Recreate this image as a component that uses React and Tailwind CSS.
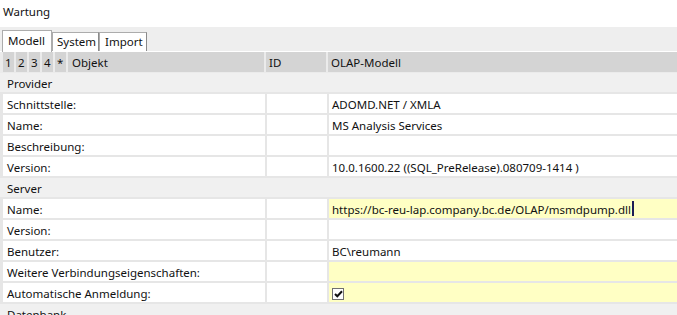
import { useState } from "react";

const rows = [
  { group: "Provider" },
  { label: "Schnittstelle:", value: "ADOMD.NET / XMLA" },
  { label: "Name:", value: "MS Analysis Services" },
  { label: "Beschreibung:", value: "" },
  { label: "Version:", value: "10.0.1600.22 ((SQL_PreRelease).080709-1414 )" },
  { group: "Server" },
  { label: "Name:", value: "https://bc-reu-lap.company.bc.de/OLAP/msmdpump.dll", editable: true, cursor: true },
  { label: "Version:", value: "" },
  { label: "Benutzer:", value: "BC\\reumann" },
  { label: "Weitere Verbindungseigenschaften:", value: "", editable: true },
  { label: "Automatische Anmeldung:", checkbox: true, editable: true },
  { group: "Datenbank" },
];

const tabs = [
  { label: "Modell", w: "w-[50px] pl-[5px]" },
  { label: "System", w: "w-[47px] pl-[4px]" },
  { label: "Import", w: "w-[48px] pl-[5px]" },
];

function CheckBox({ checked }) {
  return (
    <span className="inline-flex items-center justify-center w-[12px] h-[12px] border border-[#707070] bg-white">
      {checked && (
        <svg width="9" height="8" viewBox="0 0 9 8">
          <path d="M1 4 L3.3 6.3 L8 1.3" fill="none" stroke="#111" strokeWidth="2" />
        </svg>
      )}
    </span>
  );
}

function Tab({ label, width, active, onClick }) {
  return (
    <button
      onClick={onClick}
      className={`${width} text-left border-t border-l border-r border-[#acacac] bg-white ${
        active ? "h-[22px] pb-[2px] z-10 -mb-px" : "h-[19px] border-r-[#8a8a8a]"
      }`}
    >
      {label}
    </button>
  );
}

export default function App() {
  const [tab, setTab] = useState("Modell");

  return (
    <div
      className="w-[677px] h-[315px] overflow-hidden bg-[#f0f0f0] text-[11.5px] leading-[16px] text-[#111]"
      style={{ fontFamily: '"Segoe UI", "Noto Sans", sans-serif' }}
    >
      {/* Title */}
      <div className="h-[27px] bg-white pl-[3px] pt-[4px]">Wartung</div>

      {/* Tabs */}
      <div className="h-[25px] bg-[#eeeeee] flex items-end pl-[2px] border-b border-white">
        {tabs.map((t) => (
          <Tab
            key={t.label}
            label={t.label}
            width={t.w}
            active={tab === t.label}
            onClick={() => setTab(t.label)}
          />
        ))}
      </div>

      {/* Column header */}
      <div className="h-[21px] flex gap-[2px] pl-[3px] bg-[#ebebeb] pb-[1px]">
        {["1", "2", "3", "4", "*"].map((n) => (
          <div key={n} className="w-[11px] bg-[#d4d4d4] flex items-center pl-[2px] pt-[1px]">
            {n}
          </div>
        ))}
        <div className="w-[196px] bg-[#d4d4d4] flex items-center pl-[4px] pt-[1px]">Objekt</div>
        <div className="w-[60px] bg-[#d4d4d4] flex items-center pl-[3px] pt-[1px]">ID</div>
        <div className="flex-1 bg-[#d4d4d4] flex items-center pl-[3px] pt-[1px]">OLAP-Modell</div>
      </div>

      {/* Rows */}
      <div className="flex flex-col gap-[2px] bg-[#e6e6e6]">
        {rows.map((r, i) =>
          r.group ? (
            <div key={i} className="h-[19px] bg-[#f0f0f0] flex items-center pl-[7px] pt-[2px]">
              {r.group}
            </div>
          ) : (
            <div key={i} className="h-[19px] flex gap-[2px] pl-[3px]">
              <div className="w-[262px] bg-white flex items-center pl-[4px] pt-[2px]">{r.label}</div>
              <div className="w-[60px] bg-white" />
              <div
                className={`flex-1 flex items-center pl-[3px] pt-[2px] ${
                  r.editable ? "bg-[#ffffc4]" : "bg-white"
                }`}
              >
                {r.checkbox ? (
                  <CheckBox checked />
                ) : (
                  <>
                    {r.value}
                    {r.cursor && <span className="inline-block w-[2px] h-[15px] bg-[#1c1c55] ml-[1px] -mt-[2px]" />}
                  </>
                )}
              </div>
            </div>
          )
        )}
      </div>
    </div>
  );
}
